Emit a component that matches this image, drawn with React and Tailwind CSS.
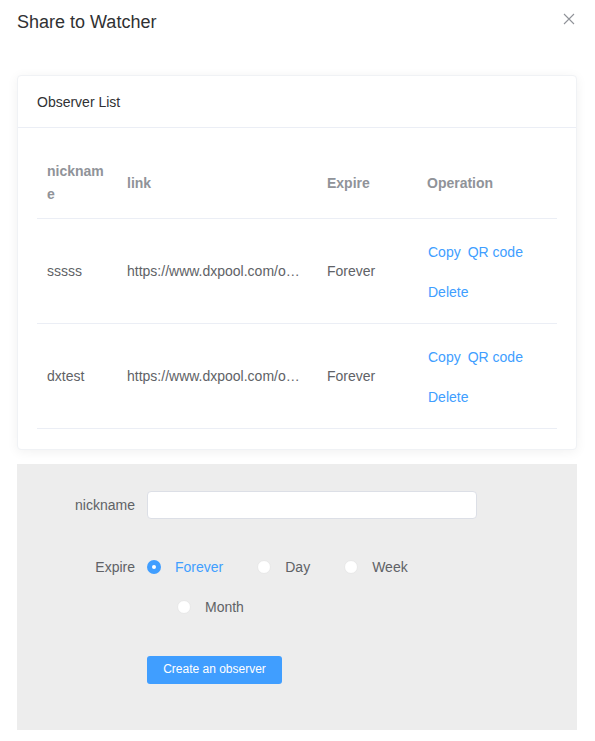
import React, { useState } from "react";

const rows = [
  { id: 1, nickname: "sssss", link: "https://www.dxpool.com/observer/share/8f3a2c91d7", expire: "Forever" },
  { id: 2, nickname: "dxtest", link: "https://www.dxpool.com/observer/share/b41e07aa52", expire: "Forever" },
];

const options = [
  { value: "forever", label: "Forever", ml: "" },
  { value: "day", label: "Day", ml: "ml-[34px]" },
  { value: "week", label: "Week", ml: "ml-[34px]" },
  { value: "month", label: "Month", ml: "ml-[30px]" },
];

const Radio = ({ checked }) =>
  checked ? (
    <span className="w-[14px] h-[14px] rounded-full bg-[#409eff] flex items-center justify-center shrink-0">
      <span className="w-[4px] h-[4px] rounded-full bg-white" />
    </span>
  ) : (
    <span className="w-[14px] h-[14px] rounded-full bg-white border border-[#e8e8e8] shrink-0" />
  );

const App = () => {
  const [expire, setExpire] = useState("forever");
  const [nickname, setNickname] = useState("");

  return (
    <div
      className="w-[595px] h-[741px] bg-white relative overflow-hidden"
      style={{ fontFamily: '"Liberation Sans", Arial, sans-serif' }}
    >
      {/* dialog header */}
      <div className="pt-[10px] px-[17px]">
        <h2 className="text-[18px] leading-[24px] text-[#303133]">Share to Watcher</h2>
      </div>
      <button className="absolute left-[563px] top-[13px] w-[12px] h-[12px]">
        <svg width="12" height="12" viewBox="0 0 12 12">
          <path d="M1 1L11 11M11 1L1 11" stroke="#909399" strokeWidth="1.1" fill="none" />
        </svg>
      </button>

      {/* observer list card */}
      <div className="mt-[41px] mx-[17px] w-[560px] bg-white border border-[#f0f2f5] rounded-[4px] shadow-[0_2px_12px_0_rgba(0,0,0,0.06)]">
        <div className="h-[52px] px-[19px] flex items-center border-b border-[#ebeef5] text-sm text-[#303133]">
          Observer List
        </div>
        <div className="py-5 px-[19px]">
          <div className="text-sm">
            <div className="flex border-b border-[#ebeef5] font-bold text-[#909399]">
              <div className="w-[80px] py-3 px-[10px] leading-[23px] break-all">nickname</div>
              <div className="w-[200px] py-3 px-[10px] leading-[23px] flex items-center">link</div>
              <div className="w-[100px] py-3 px-[10px] leading-[23px] flex items-center">Expire</div>
              <div className="w-[140px] py-3 px-[10px] leading-[23px] flex items-center">Operation</div>
            </div>
            {rows.map((r) => (
              <div key={r.id} className="flex items-center border-b border-[#ebeef5] text-[#606266]">
                <div className="w-[80px] px-[10px]">{r.nickname}</div>
                <div className="w-[200px] px-[10px]">
                  <div className="truncate">{r.link}</div>
                </div>
                <div className="w-[100px] px-[10px]">{r.expire}</div>
                <div className="w-[140px] px-[10px] pt-[13px] pb-[11px] text-[#409eff]">
                  <div className="h-[40px] flex items-center gap-[7px] pl-px">
                    <button>Copy</button>
                    <button>QR code</button>
                  </div>
                  <div className="h-[40px] flex items-center pl-px">
                    <button>Delete</button>
                  </div>
                </div>
              </div>
            ))}
          </div>
        </div>
      </div>

      {/* create form */}
      <div className="mt-[14px] mx-[17px] w-[560px] h-[266px] bg-[#ededed] pt-[27px] pl-[18px] text-sm text-[#606266]">
        <div className="flex items-center h-[28px]">
          <label className="w-[112px] pr-3 text-right">nickname</label>
          <input
            value={nickname}
            onChange={(e) => setNickname(e.target.value)}
            className="w-[330px] h-[28px] bg-white border border-[#dcdfe6] rounded-[4px] px-[15px] outline-none"
          />
        </div>
        <div className="flex mt-[28px]">
          <label className="w-[112px] pr-3 text-right leading-[40px]">Expire</label>
          <div className="w-[330px] flex flex-wrap">
            {options.map((o) => (
              <button
                key={o.value}
                onClick={() => setExpire(o.value)}
                className={`h-[40px] flex items-center ${o.ml}`}
              >
                <Radio checked={expire === o.value} />
                <span className={`ml-[14px] ${expire === o.value ? "text-[#409eff]" : "text-[#606266]"}`}>
                  {o.label}
                </span>
              </button>
            ))}
          </div>
        </div>
        <div className="mt-[29px] pl-[112px]">
          <button className="w-[135px] h-[28px] bg-[#409eff] text-white text-[12px] rounded-[3px]">
            Create an observer
          </button>
        </div>
      </div>
    </div>
  );
};

export default App;
